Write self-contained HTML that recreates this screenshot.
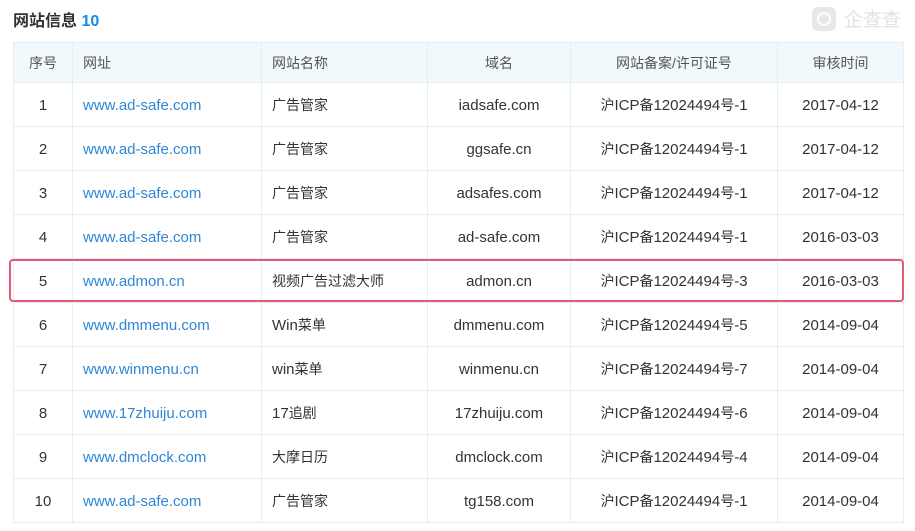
<!DOCTYPE html>
<html><head><meta charset="utf-8"><style>
body{margin:0;width:915px;height:531px;background:#fff;font-family:"Liberation Sans","Noto Sans CJK SC",sans-serif;position:relative;overflow:hidden}
.title{position:absolute;left:13px;top:7px;font-size:16px;font-weight:bold;color:#333}
.title b{color:#128bed}
.logo{position:absolute;left:812px;top:5px;color:#e2e2e2;font-size:19px;display:flex;align-items:center}
.logo i{display:inline-block;width:24px;height:24px;border-radius:6px;background:#e8e8e8;margin-right:8px;position:relative}
.logo i:after{content:"";position:absolute;left:5px;top:5px;width:10px;height:10px;border:2px solid #fff;border-radius:50%}
table{position:absolute;left:13px;top:42px;border-collapse:collapse;font-size:15px;color:#333;table-layout:fixed}
td,th{border:1px solid #e4eef6;height:43px;padding:0;text-align:center;font-weight:normal;white-space:nowrap;line-height:20px}
td{padding-top:2px;height:41px}
th{background:#f2f9fc;height:39px;color:#555;font-size:14px}
.l{text-align:left;padding-left:10px}
a{color:#2f86d6;text-decoration:none}
s{text-decoration:none;font-size:14px;line-height:1;vertical-align:baseline}
.red{position:absolute;left:9px;top:259px;width:891px;height:39px;border:2px solid #e35b72;border-radius:4px}
</style></head><body>
<div class="title">网站信息 <b>10</b></div>
<div class="logo"><i></i>企查查</div>
<table>
<tr><th style="width:58px">序号</th><th class="l" style="width:178px;text-align:left">网址</th><th class="l" style="width:155px;text-align:left">网站名称</th><th style="width:142px">域名</th><th style="width:206px">网站备案/许可证号</th><th style="width:125px">审核时间</th></tr>
<tr><td>1</td><td class="l"><a>www.ad-safe.com</a></td><td class="l"><s>广告管家</s></td><td>iadsafe.com</td><td><s>沪</s>ICP<s>备</s>12024494<s>号</s>-1</td><td>2017-04-12</td></tr>
<tr><td>2</td><td class="l"><a>www.ad-safe.com</a></td><td class="l"><s>广告管家</s></td><td>ggsafe.cn</td><td><s>沪</s>ICP<s>备</s>12024494<s>号</s>-1</td><td>2017-04-12</td></tr>
<tr><td>3</td><td class="l"><a>www.ad-safe.com</a></td><td class="l"><s>广告管家</s></td><td>adsafes.com</td><td><s>沪</s>ICP<s>备</s>12024494<s>号</s>-1</td><td>2017-04-12</td></tr>
<tr><td>4</td><td class="l"><a>www.ad-safe.com</a></td><td class="l"><s>广告管家</s></td><td>ad-safe.com</td><td><s>沪</s>ICP<s>备</s>12024494<s>号</s>-1</td><td>2016-03-03</td></tr>
<tr><td>5</td><td class="l"><a>www.admon.cn</a></td><td class="l"><s>视频广告过滤大师</s></td><td>admon.cn</td><td><s>沪</s>ICP<s>备</s>12024494<s>号</s>-3</td><td>2016-03-03</td></tr>
<tr><td>6</td><td class="l"><a>www.dmmenu.com</a></td><td class="l">Win<s>菜单</s></td><td>dmmenu.com</td><td><s>沪</s>ICP<s>备</s>12024494<s>号</s>-5</td><td>2014-09-04</td></tr>
<tr><td>7</td><td class="l"><a>www.winmenu.cn</a></td><td class="l">win<s>菜单</s></td><td>winmenu.cn</td><td><s>沪</s>ICP<s>备</s>12024494<s>号</s>-7</td><td>2014-09-04</td></tr>
<tr><td>8</td><td class="l"><a>www.17zhuiju.com</a></td><td class="l">17<s>追剧</s></td><td>17zhuiju.com</td><td><s>沪</s>ICP<s>备</s>12024494<s>号</s>-6</td><td>2014-09-04</td></tr>
<tr><td>9</td><td class="l"><a>www.dmclock.com</a></td><td class="l"><s>大摩日历</s></td><td>dmclock.com</td><td><s>沪</s>ICP<s>备</s>12024494<s>号</s>-4</td><td>2014-09-04</td></tr>
<tr><td>10</td><td class="l"><a>www.ad-safe.com</a></td><td class="l"><s>广告管家</s></td><td>tg158.com</td><td><s>沪</s>ICP<s>备</s>12024494<s>号</s>-1</td><td>2014-09-04</td></tr>
</table>
<div class="red"></div>
</body></html>
